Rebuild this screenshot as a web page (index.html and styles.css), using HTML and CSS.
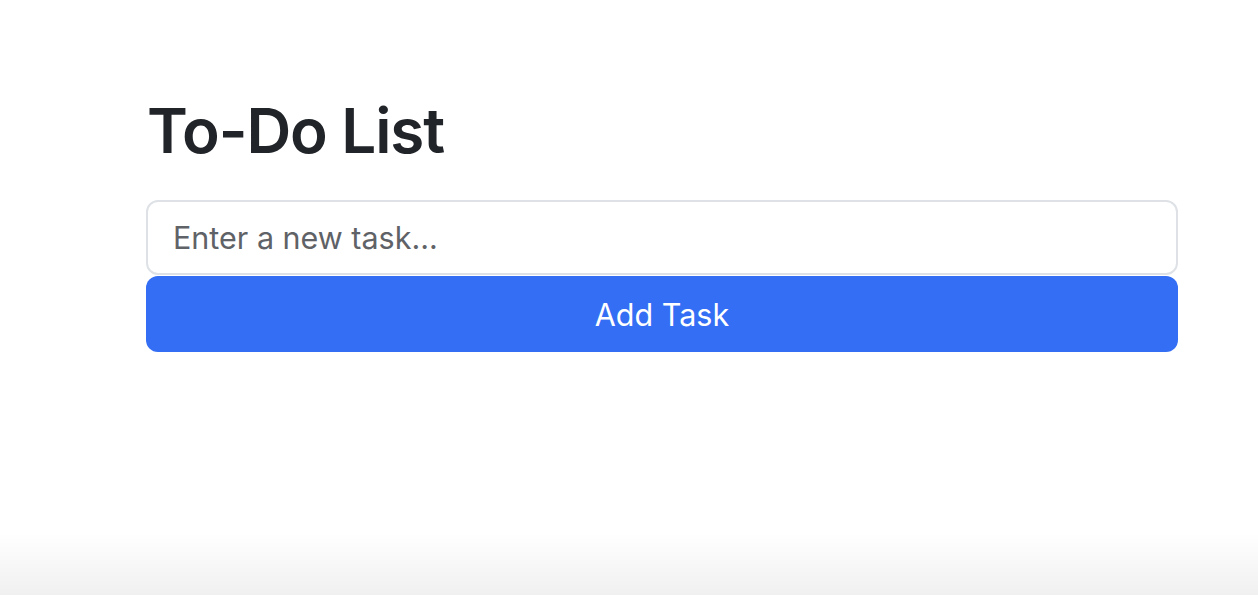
FILE: index.html
```html
<!DOCTYPE html>
<html lang="en">
<head>
<meta charset="utf-8">
<title>To-Do List</title>
<link rel="stylesheet" href="styles.css">
</head>
<body>
<main class="container">
  <h1 class="title">To-Do List</h1>
  <form class="task-form">
    <input class="task-input" type="text" placeholder="Enter a new task...">
    <button class="task-btn" type="button">Add Task</button>
  </form>
</main>
<div class="bottom-shade"></div>
</body>
</html>
```

FILE: styles.css
```css
html, body {
  margin: 0;
  padding: 0;
  background: #fff;
  height: 100%;
}
body {
  font-family: Inter, "Liberation Sans", Arial, sans-serif;
  color: #212529;
  overflow: hidden;
}
.container {
  width: 1032px;
  margin-left: 146px;
  padding-top: 92px;
}
.title {
  margin: 0 0 30px 1px;
  font-size: 62px;
  font-weight: 600;
  line-height: 78px;
  letter-spacing: -1.1px;
}
.task-form {
  display: flex;
  flex-direction: column;
  gap: 1px;
}
.task-input {
  box-sizing: border-box;
  height: 75px;
  width: 100%;
  border: 2px solid #dee2e6;
  border-radius: 12px;
  padding: 0 25px;
  font-family: inherit;
  font-size: 30.5px;
  color: #212529;
  outline: none;
}
.task-input::placeholder {
  color: #5f6266;
}
.task-btn {
  height: 76px;
  width: 100%;
  border: none;
  border-radius: 12px;
  background: #336ef4;
  color: #fff;
  font-family: inherit;
  font-size: 30.5px;
}
.bottom-shade {
  position: fixed;
  left: 0;
  right: 0;
  bottom: 0;
  height: 62px;
  background: linear-gradient(to bottom, rgba(0,0,0,0), rgba(0,0,0,0.06));
  pointer-events: none;
}
```
